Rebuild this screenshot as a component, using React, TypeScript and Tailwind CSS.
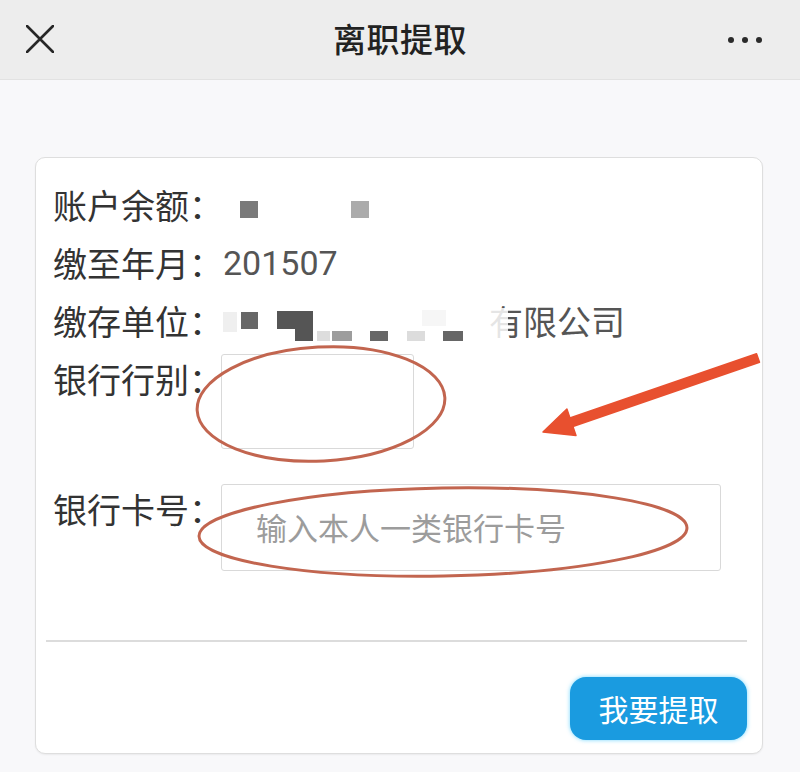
import React from 'react';

const cjk = '"Noto Sans CJK SC", "Noto Sans", sans-serif';
const digits = 'Roboto, "Noto Sans CJK SC", sans-serif';

// mosaic blocks covering the private values, coordinates inside the value area
const balanceBlocks = [
    { x: 17, y: 25, w: 18, h: 17, c: '#7a7a7a' },
    { x: 128, y: 25, w: 18, h: 17, c: '#ababab' },
];

const employerBlocks = [
    { x: 0, y: 0, w: 14, h: 20, c: '#efefef' },
    { x: 18, y: 0, w: 17, h: 17, c: '#676767' },
    { x: 54, y: -1, w: 36, h: 18, c: '#555555' },
    { x: 72, y: 17, w: 18, h: 12, c: '#555555' },
    { x: 94, y: 19, w: 13, h: 10, c: '#dddddd' },
    { x: 109, y: 19, w: 20, h: 10, c: '#9d9d9d' },
    { x: 147, y: 19, w: 18, h: 10, c: '#676767' },
    { x: 184, y: 19, w: 18, h: 10, c: '#dcdcdc' },
    { x: 220, y: 19, w: 20, h: 10, c: '#666666' },
    { x: 199, y: -2, w: 24, h: 16, c: '#f6f6f6' },
    { x: 265, y: -4, w: 20, h: 32, c: 'rgba(255,255,255,0.85)' },
];

const Label = ({ children, tall }: { children: React.ReactNode; tall?: boolean }) => (
    <div
        className={`shrink-0 whitespace-nowrap text-[34px] text-[#333] ${tall ? 'w-[168px] leading-[50px]' : 'w-[170px] leading-[58px]'}`}
        style={{ fontFamily: cjk }}
    >
        {children}
    </div>
);

const App = () => {
    return (
        <div className="w-[800px] h-[772px] bg-[#f8f8fa] flex flex-col overflow-hidden">
            <div className="h-[80px] shrink-0 bg-[#ededed] border-b border-[#e2e2e2] flex items-center">
                <div className="w-[100px] pl-[26px]">
                    <svg width="28" height="28" viewBox="0 0 28 28" className="mt-[-2px]">
                        <path d="M1 1 L27 27 M27 1 L1 27" stroke="#262626" strokeWidth="2.6" strokeLinecap="round" />
                    </svg>
                </div>
                <div className="flex-1 text-center text-[33px] font-medium text-[#222] tracking-[0.5px] mt-[-2px]" style={{ fontFamily: cjk }}>
                    离职提取
                </div>
                <div className="w-[100px] flex justify-end pr-[38px]">
                    <div className="flex gap-[8px]">
                        <span className="w-[6px] h-[6px] rounded-full bg-[#2a2a2a]" />
                        <span className="w-[6px] h-[6px] rounded-full bg-[#2a2a2a]" />
                        <span className="w-[6px] h-[6px] rounded-full bg-[#2a2a2a]" />
                    </div>
                </div>
            </div>

            <div className="pt-[77px] pl-[35px]">
                <div className="relative w-[728px] h-[597px] bg-white border-[1.5px] border-[#dedede] rounded-[10px] shadow-[0_1px_2px_rgba(0,0,0,0.06)] pt-[18px] flex flex-col">
                    <div className="flex h-[58px] pl-[17px]">
                        <Label>账户余额：</Label>
                        <div className="relative flex-1">
                            {balanceBlocks.map((b, i) => (
                                <span key={i} className="absolute" style={{ left: b.x, top: b.y, width: b.w, height: b.h, background: b.c }} />
                            ))}
                        </div>
                    </div>
                    <div className="flex h-[58px] pl-[17px]">
                        <Label>缴至年月：</Label>
                        <div className="text-[34px] leading-[58px] text-[#555]" style={{ fontFamily: digits }}>201507</div>
                    </div>
                    <div className="flex h-[58px] pl-[17px]">
                        <Label>缴存单位：</Label>
                        <div className="relative flex-1">
                            <div className="ml-[266px] text-[34px] leading-[58px] text-[#555]" style={{ fontFamily: cjk }}>有限公司</div>
                            <div className="absolute left-0 top-[20px] w-[290px] h-[30px]">
                                {employerBlocks.map((b, i) => (
                                    <span key={i} className="absolute" style={{ left: b.x, top: b.y, width: b.w, height: b.h, background: b.c }} />
                                ))}
                            </div>
                        </div>
                    </div>

                    <div className="flex pl-[17px] mt-[4px]">
                        <Label tall>银行行别：</Label>
                        <div className="w-[193px] h-[95px] border border-[#d9d9d9] rounded-[3px]" />
                    </div>

                    <div className="flex pl-[17px] mt-[35px]">
                        <Label tall>银行卡号：</Label>
                        <input
                            placeholder="输入本人一类银行卡号"
                            className="w-[500px] h-[87px] border border-[#d9d9d9] rounded-[3px] pl-[34px] pb-[2px] text-[31px] text-[#333] placeholder:text-[#9c9c9c] outline-none bg-white"
                            style={{ fontFamily: cjk }}
                        />
                    </div>

                    <div className="mt-[69px] ml-[10px] mr-[15px] h-[2px] bg-[#dcdcdc]" />

                    <div className="flex justify-end mt-[35px] mr-[15px]">
                        <button
                            className="w-[177px] h-[63px] rounded-[16px] bg-[#1a9be0] text-white text-[30px] shadow-[0_0_4px_rgba(60,200,255,0.7)]"
                            style={{ fontFamily: cjk }}
                        >
                            我要提取
                        </button>
                    </div>

                    <svg className="absolute left-0 top-0 pointer-events-none" width="728" height="597" viewBox="0 0 728 597">
                        <ellipse cx="285" cy="246" rx="124" ry="57" fill="none" stroke="#c2654f" strokeWidth="3" transform="rotate(-3 285 246)" />
                        <ellipse cx="407" cy="374" rx="244" ry="44" fill="none" stroke="#c2654f" strokeWidth="3" transform="rotate(-1 407 374)" />
                        <polygon
                            points="723.5,204.3 536.9,268.5 540,277.5 507,274 530.9,251 533.9,260 720.5,195.7"
                            fill="#e8502f"
                            stroke="#e8502f"
                            strokeWidth="1.5"
                            strokeLinejoin="round"
                        />
                    </svg>
                </div>
            </div>
        </div>
    );
};

export default App;
